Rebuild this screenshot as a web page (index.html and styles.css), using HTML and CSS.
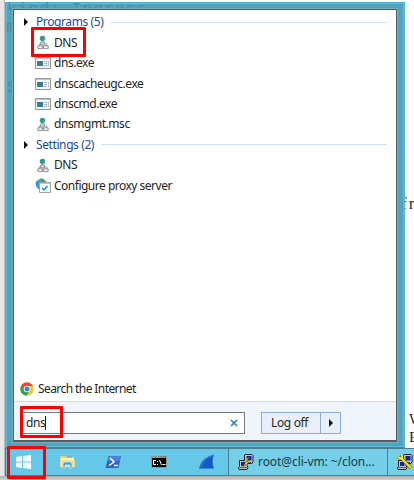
FILE: index.html
```html
<!DOCTYPE html>
<html lang="en">
<head>
<meta charset="utf-8">
<title>Start menu search</title>
<link rel="stylesheet" href="styles.css">
</head>
<body>
<svg class="defs" width="0" height="0" aria-hidden="true">
  <symbol id="dns" viewBox="0 0 14 16">
    <path d="M6.500 7v3M3 12V9.500h8V12" fill="none" stroke="#8b9395"/>
    <path d="M4.500 7.500h4v3h-4zM1.500 11.500h5v3h-5zM7.500 11.500h5v3h-5z" fill="#e0e3e3" stroke="#8a9294"/>
    <path d="M3 13h2M9 13h2" stroke="#fff"/>
    <circle cx="6.500" cy="3.800" r="3" fill="#4b9ccb"/><path d="M4 2.200l3-1.400 1.400 1-1 1.500-1.400 3-1.500-2z" fill="#359a5a"/>
  </symbol>
  <symbol id="exe" viewBox="0 0 16 12">
    <path d="M.5.5h15v11H.5z" fill="#f5f6f6" stroke="#929799"/><path d="M1 1.500h14" stroke="#c3c8cb"/>
    <path d="M2 4h6v5H2z" fill="#3b7897"/><path d="M2 6h3v3H2z" fill="#3a8a6c"/>
    <path d="M9 4.500h3M9 6.500h3M9 8.500h3" stroke="#a8afb3"/><path d="M13.500 4v5" stroke="#bbc1c4"/>
  </symbol>
  <symbol id="putty" viewBox="0 0 16 16">
    <path d="M7 .500h7l1 1v6l-1 2H8L6.500 8V1z" fill="#c6c6c2" stroke="#222"/><path d="M8.500 2h5v4.500h-5z" fill="#17249a"/>
    <path d="M1.500 6.500H8l1 1v4l1 2-1 2H1l-.500-2 1-1z" fill="#c8c8c3" stroke="#222"/><path d="M3 8h4.500v4H3z" fill="#17249a"/>
    <path d="M1.500 13.500H9M8 8.500h5" stroke="#555"/>
  </symbol>
</svg>
<div class="desktop">
  <div class="document">
    <p class="snippet mid">fr</p>
    <p class="snippet low">W</p>
    <p class="snippet low">E</p>
  </div>
  <main class="start-menu">
    <span class="ghost ghost-a">kind: Ingress</span>
    <span class="ghost ghost-b">m</span>
    <span class="ghost ghost-c">S</span>
    <section class="panel">
      <div class="results">
        <h2><i class="tri"></i><span>Programs (5)</span><b></b></h2>
        <div class="row"><svg class="i-dns"><use href="#dns"/></svg><span>DNS</span></div>
        <div class="row"><svg class="i-exe"><use href="#exe"/></svg><span>dns.exe</span></div>
        <div class="row"><svg class="i-exe"><use href="#exe"/></svg><span>dnscacheugc.exe</span></div>
        <div class="row"><svg class="i-exe"><use href="#exe"/></svg><span>dnscmd.exe</span></div>
        <div class="row"><svg class="i-dns"><use href="#dns"/></svg><span>dnsmgmt.msc</span></div>
        <h2><i class="tri"></i><span class="set">Settings (2)</span><b></b></h2>
        <div class="row"><svg class="i-dns"><use href="#dns"/></svg><span>DNS</span></div>
        <div class="row"><svg class="i-proxy" viewBox="0 0 16 15"><circle cx="6" cy="6" r="5.500" fill="#4497d5"/><path d="M4 1l4-.500L9 2 7 4 6 6 4 5zM8 1l3 3-3 1z" fill="#48a45e"/><path d="M2 3q1-2 3-2" stroke="#c7e6f8" fill="none"/><path d="M4.500 4.500h11v10h-11z" fill="#fcfdfe" stroke="#9aa2a9"/><path d="M5 5.500h10" stroke="#c5cbd0"/><path d="M7 10l2 2 3.500-4" fill="none" stroke="#2384c7" stroke-width="1.500"/></svg><span class="proxy">Configure proxy server</span></div>
      </div>
      <div class="internet">
        <svg width="14" height="14" viewBox="0 0 14 14"><circle cx="7" cy="7" r="6.700" fill="#f3c52d"/><path d="M1.200 3.700A6.700 6.700 0 0 1 12.900 4H7L4 8.500z" fill="#dc4a3d"/><path d="M1.200 3.700A6.700 6.700 0 0 0 6.500 13.700L9.500 9 4.500 8.500z" fill="#38a159"/><circle cx="7" cy="7" r="3.300" fill="#fff"/><circle cx="7" cy="7" r="2.500" fill="#4285d6"/></svg>
        <span>Search the Internet</span>
      </div>
      <footer>
        <div class="search"><span>dns</span><i class="caret"></i><svg width="8" height="8" viewBox="0 0 8 8"><path d="M1 1l6 6M7 1L1 7" stroke="#2d80c3" stroke-width="1.700"/></svg></div>
        <div class="logoff"><span>Log off</span><em><i class="tri"></i></em></div>
      </footer>
    </section>
  </main>
  <nav class="taskbar">
    <div class="slot s1"><svg width="15" height="14" viewBox="0 0 15 14"><path d="M0 2l6-.900v5.400H0zM7 1l8-1v6.500H7zM0 7.500h6v5.400L0 12zM7 7.500h8V14l-8-1z" fill="#f5fcff"/></svg></div>
    <div class="slot s2"><svg width="17" height="14" viewBox="0 0 17 14"><path d="M1 2l1-1h5l1 1h7v10H1z" fill="#e8cf78"/><path d="M2 3h13v2H2z" fill="#fbf2bd"/><path d="M8 2h5" stroke="#6aae74"/><path d="M1 5h15v7H1z" fill="#f3df94"/><path d="M4 13V9q0-2 2-2h5q2 0 2 2v4h-2v-3H6v3z" fill="#3fa4d8" stroke="#d5effa" stroke-width=".700"/></svg></div>
    <div class="slot s3"><svg width="17" height="12" viewBox="0 0 17 12"><path d="M3.500 0H16l-2.500 12H.500z" fill="#2c65bd"/><path d="M4 0h11.500l-1 5H2.500z" fill="#4b83d4"/><path d="M5 2l4 4-5 3.500M9 9.500h4" fill="none" stroke="#fff" stroke-width="1.500"/></svg></div>
    <div class="slot s4"><svg width="16" height="12" viewBox="0 0 16 12"><path d="M0 0h16v12H0z" fill="#8f9799"/><path d="M1 2h14v9H1z" fill="#050505"/><path d="M10 1h1M12 1h1M14 1h1" stroke="#444"/><path d="M5 4.500H2.500v4H5M6.500 5v1M6.500 8v1M8.500 4l2 5M11.500 8.500h3" fill="none" stroke="#fff"/></svg></div>
    <div class="slot s5"><svg width="16" height="14" viewBox="0 0 16 14"><path d="M0 13.500C2 6 7 1 15 0q-3 6 0 13.500z" fill="#1559c9"/><path d="M2 12C4 6 8 2 13 1" fill="none" stroke="#3e86e5"/></svg></div>
    <div class="task"><svg width="16" height="16" viewBox="0 0 16 16"><use href="#putty"/><path d="M11 3L5 8h3l-3 5 6-5H8z" fill="#ffed22" stroke="#756a00" stroke-width=".400"/></svg><span>root@cli-vm: ~/clon...</span></div>
    <div class="task next"><svg width="16" height="16" viewBox="0 0 16 16"><use href="#putty"/><path d="M1 3l4 2 9 9M5 1v4" fill="none" stroke="#554d00" stroke-width="3"/><path d="M1 3l4 2 9 9M5 1v4" fill="none" stroke="#ffe719" stroke-width="2"/></svg></div>
  </nav>
  <div class="mark mark-result"></div>
  <div class="mark mark-search"></div>
  <div class="mark mark-start"></div>
</div>
</body>
</html>
```
FILE: styles.css
```css
* { box-sizing: border-box; }
body { margin: 0; font: 12px/20px "Noto Sans", "Open Sans", sans-serif; color: #252525; }
.defs { position: absolute; }
.desktop { position: relative; width: 414px; height: 480px; overflow: hidden; background: linear-gradient(90deg, #e7e7e7 0 4px, #bababa 4px 5px, #fff 5px); padding-left: 5px; }
.document { position: absolute; right: 0; top: 0; width: 12px; height: 448px; padding-top: 195px; font: 15px/18px "Liberation Serif", serif; color: #252a38; }
.snippet { margin: 0; white-space: nowrap; }
.mid { margin-left: -1px; height: 215px; font-size: 17px; letter-spacing: 2px; }
.low { margin-left: 7px; }
.start-menu { position: relative; width: 400px; height: 446px; margin-top: 2px; padding: 6px 6px 5px 7px; background: #53a3bf; border: 1px solid #4bb2d1; border-bottom-color: #3c8ba6; box-shadow: inset 0 0 0 1px #60bdd9; }
.ghost { position: absolute; left: 1px; font: 16px/16px "Liberation Mono", monospace; letter-spacing: 1.2px; color: #488fa8; }
.ghost-a { top: -1px; height: 8px; overflow: hidden; }
.ghost-b { top: 17px; left: 0; width: 6px; overflow: hidden; }
.ghost-c { top: 77px; width: 5px; overflow: hidden; }
.panel { position: relative; display: flex; flex-direction: column; width: 384px; height: 433px; border: 1px solid #555b5e; border-bottom-width: 2px; background: #fff; box-shadow: 0 0 0 1px #77aebe; }
.results { padding: 2px 9px 0; }
.results h2, .row { height: 20.45px; margin: 0; display: flex; align-items: center; font-size: 12px; font-weight: 400; white-space: nowrap; }
.results h2 { color: #2747a2; padding-left: 1px; }
h2 span { width: 67px; margin: 0 7px 0 8px; letter-spacing: -.4px; }
h2 .set { width: 58px; }
h2 b { flex: 1; height: 1px; background: #cfe3f5; }
.tri { width: 0; height: 0; border: 4px solid transparent; border-left-color: #111; border-right: 0; }
.row svg { flex: none; width: 16px; }
.row { padding-left: 12px; gap: 3px; letter-spacing: -.45px; }
.row .proxy { letter-spacing: -.5px; }
.row .i-dns { height: 15px; }
.row .i-exe { height: 12px; }
.row .i-proxy { height: 15px; }
.internet { margin-top: auto; height: 25px; padding: 0 6px; display: flex; align-items: center; gap: 4px; letter-spacing: -.58px; }
footer { height: 39px; border-top: 1px solid #cbd9ea; background: #f0f4fb; display: flex; align-items: flex-start; gap: 16px; padding: 10px 6px 0 7px; }
.search { width: 224px; height: 22px; border: 1px solid #747b7d; background: #fff; display: flex; align-items: center; padding: 0 6px 0 4px; letter-spacing: -.4px; }
.caret { width: 1px; height: 14px; background: #222; }
.search svg { margin-left: auto; }
.logoff { width: 80px; height: 22px; border: 1px solid #8aacd5; background: #e8effb; display: flex; letter-spacing: -.35px; }
.logoff span { flex: 1; padding-left: 9px; }
.logoff em { width: 20px; border-left: 1px solid #8aacd5; display: flex; align-items: center; justify-content: center; }
.taskbar { width: 409px; height: 28px; display: flex; background: #66c8e8; border: 1px solid #487f92; border-right: 0; }
.slot { display: flex; align-items: center; justify-content: center; height: 26px; flex: none; }
.s1 { width: 34px; } .s2 { width: 54px; } .s3 { width: 38px; } .s4 { width: 53px; } .s5 { width: 43px; }
.task { width: 160px; border: solid #477f92; border-width: 0 1px; background: #75cfe9; display: flex; align-items: center; gap: 4px; padding-left: 9px; flex: none; color: #183a47; white-space: nowrap; letter-spacing: -.08px; }
.task.next { padding-left: 9px; width: 40px; border-left: 0; }
.desktop::after { content: ""; display: block; margin-left: -5px; height: 4px; background: linear-gradient(#b0b0b0, #d0d0d0); }
.mark { position: absolute; border: 3px solid #f00; border-radius: 1px; }
.mark-result { left: 31px; top: 27px; width: 55px; height: 30px; }
.mark-search { left: 20px; top: 406px; width: 43px; height: 32px; }
.mark-start { left: 7px; top: 446px; width: 39px; height: 33px; }
```
